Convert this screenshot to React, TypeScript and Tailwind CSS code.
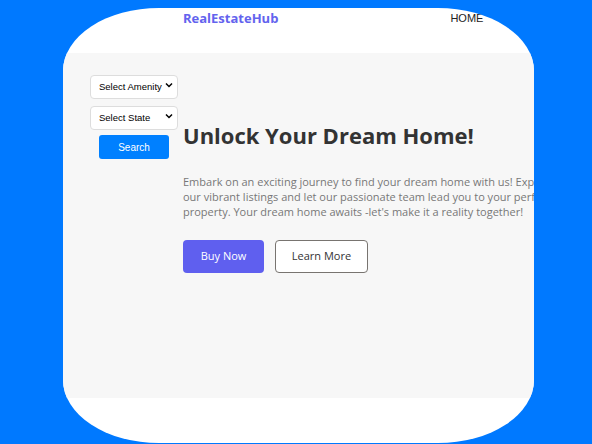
import React from 'react';

const openSans = { fontFamily: '"Open Sans", "Noto Sans", sans-serif' };
const arial = { fontFamily: '"Liberation Sans", Arial, sans-serif' };

const Chevron: React.FC = () => (
  <svg className="pointer-events-none absolute right-[5px] top-1/2 h-[6px] w-[8px] -translate-y-1/2" viewBox="0 0 8 6" fill="none">
    <path d="M1 1.5 4 4.5 7 1.5" stroke="#000" strokeWidth="1.5" />
  </svg>
);

const Dropdown: React.FC<{ label: string }> = ({ label }) => (
  <div className="relative h-[24px] w-[88px]">
    <select className="h-full w-full appearance-none rounded-[4px] border border-[#dddddd] bg-white pl-[8px] text-[9.5px] text-black">
      <option>{label}</option>
    </select>
    <Chevron />
  </div>
);

const Sidebar: React.FC = () => (
  <aside className="flex w-[88px] shrink-0 flex-col items-center gap-[7px] pt-[20px]" style={arial}>
    <Dropdown label="Select Amenity" />
    <Dropdown label="Select State" />
    <button className="h-[24px] w-[70px] rounded-[3px] bg-[#0080ff] text-[10px] text-white">Search</button>
  </aside>
);

const Hero: React.FC = () => (
  <section className="w-[380px] shrink-0 pt-[67px]" style={openSans}>
    <h1 className="text-[22px] font-bold leading-[30px] text-[#333333]">Unlock Your Dream Home!</h1>
    <p className="mt-[24px] text-[11px] leading-[15px] text-[#777777]">
      Embark on an exciting journey to find your dream home with us! Explore our vibrant listings and let our passionate team lead you to your perfect property. Your dream home awaits -let's make it a reality together!
    </p>
    <div className="mt-[21px] flex gap-[11px]">
      <button className="h-[33px] w-[81px] rounded-[4px] bg-[#5f5fef] text-[11px] text-white">Buy Now</button>
      <button className="h-[33px] w-[93px] rounded-[4px] border-[1.5px] border-[#787470] bg-white text-[11px] text-[#333333]">Learn More</button>
    </div>
  </section>
);

export default function App() {
  return (
    <div className="h-[444px] w-[592px] overflow-hidden bg-[#0079ff] pt-[8px] pl-[63px]">
      <div className="h-[435px] w-[471px] overflow-hidden rounded-[96px/63px] bg-white">
        <header className="flex h-[45px] items-start">
          <div className="ml-[120px] text-[13px] font-bold leading-[20px] text-[#6363ee]" style={openSans}>RealEstateHub</div>
          <nav className="ml-[172px] text-[11px] leading-[20px] text-[#222222]" style={arial}>
            HOME
          </nav>
        </header>
        <main className="flex h-[345px] gap-[5px] bg-[#f7f7f7] pl-[27px]">
          <Sidebar />
          <Hero />
        </main>
      </div>
    </div>
  );
}
